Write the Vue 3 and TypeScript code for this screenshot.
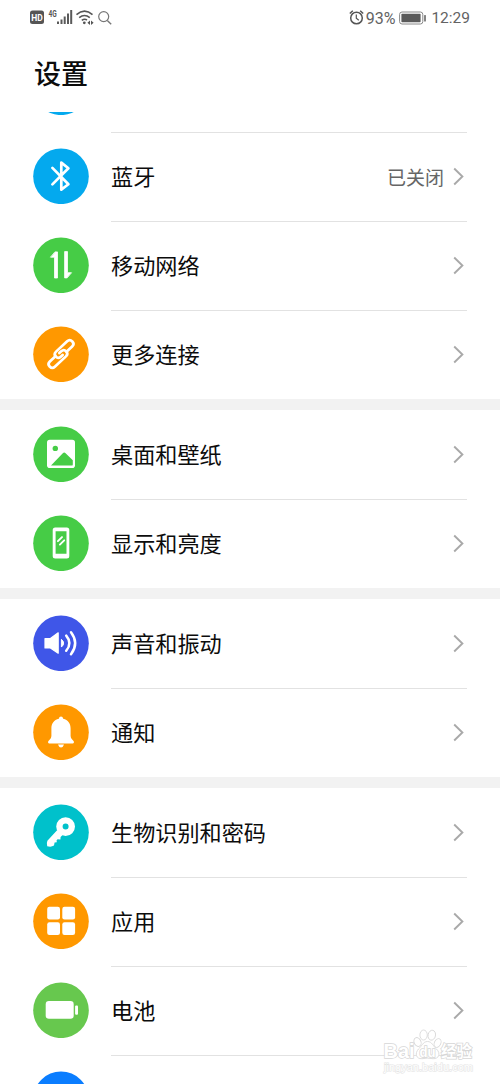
<script setup lang="ts">
type IconName =
  | 'wifi' | 'bluetooth' | 'mobile' | 'link' | 'picture' | 'phone'
  | 'sound' | 'bell' | 'key' | 'apps' | 'battery' | 'storage'

interface Item {
  label: string
  icon: IconName
  tone: string
  value?: string
}

const groups: Item[][] = [
  [
    { label: '', icon: 'wifi', tone: 'sky' },
    { label: '蓝牙', icon: 'bluetooth', tone: 'sky', value: '已关闭' },
    { label: '移动网络', icon: 'mobile', tone: 'green' },
    { label: '更多连接', icon: 'link', tone: 'orange' },
  ],
  [
    { label: '桌面和壁纸', icon: 'picture', tone: 'green' },
    { label: '显示和亮度', icon: 'phone', tone: 'green' },
  ],
  [
    { label: '声音和振动', icon: 'sound', tone: 'indigo' },
    { label: '通知', icon: 'bell', tone: 'orange' },
  ],
  [
    { label: '生物识别和密码', icon: 'key', tone: 'teal' },
    { label: '应用', icon: 'apps', tone: 'orange' },
    { label: '电池', icon: 'battery', tone: 'lime' },
    { label: '', icon: 'storage', tone: 'blue' },
  ],
]
</script>

<template>
  <main class="screen">
    <header class="status">
      <div class="status-left">
        <svg width="84" height="20" viewBox="0 0 84 20">
          <rect x="0" y="3.5" width="14" height="13.5" rx="2.5" fill="#555" />
          <text x="7" y="13.6" class="hd" text-anchor="middle">HD</text>
          <text x="18.6" y="9.6" class="fourg" textLength="8.2" lengthAdjust="spacingAndGlyphs">4G</text>
          <g fill="#5a5a5a">
            <rect x="27" y="14.5" width="2" height="2.5" />
            <rect x="30.5" y="12.5" width="2" height="4.5" />
            <rect x="33.7" y="9.5" width="2" height="7.5" />
            <rect x="37" y="6.5" width="2" height="10.5" />
            <rect x="40.2" y="3" width="2" height="14" />
          </g>
          <g fill="none" stroke="#555" stroke-width="1.6">
            <path d="M46.5 7.6 Q54.5 0.8 62.5 7.6" />
            <path d="M49.2 10.7 Q54.5 6.3 59.8 10.7" />
            <path d="M51.8 13.4 Q54.5 11.4 57 13" />
          </g>
          <circle cx="54.3" cy="15.8" r="1.4" fill="#555" />
          <path d="M60 13.6 L57.4 15.8 L60 18 Z M61 13.6 L63.6 15.8 L61 18 Z" fill="#555" />
          <circle cx="73.7" cy="9.6" r="5" fill="none" stroke="#777" stroke-width="1.2" />
          <path d="M77.3 13.4 L81.2 17.2" stroke="#777" stroke-width="1.4" />
        </svg>
      </div>
      <div class="status-right">
        <svg class="alarm" width="15" height="17" viewBox="0 0 15 17">
          <g fill="none" stroke="#555" stroke-width="1.5">
            <circle cx="7.5" cy="9" r="5.8" />
            <path d="M7.3 5.5 V9.2 L9.8 11.2" stroke-width="1.2" />
            <path d="M0.8 4.5 L3.8 1.8 M11.2 1.8 L14.2 4.5" />
          </g>
        </svg>
        <span class="percent">93%</span>
        <svg class="cell" width="28" height="14" viewBox="0 0 28 14">
          <rect x="0.6" y="1" width="23.2" height="12" rx="2.4" fill="none" stroke="#888" />
          <rect x="2.4" y="2.8" width="19.2" height="8.4" rx="0.8" fill="#5a5a5a" />
          <rect x="25.2" y="4" width="1.6" height="6.5" rx="0.6" fill="#666" />
        </svg>
        <span class="clock">12:29</span>
      </div>
    </header>

    <h1 class="title">设置</h1>

    <div class="list">
      <section v-for="(group, g) in groups" :key="g" class="group">
        <div v-for="item in group" :key="item.icon" class="row">
          <svg
            class="badge" :class="item.tone" width="56" height="56" viewBox="0 0 56 56"
            fill="none" stroke-linecap="round" stroke-linejoin="round"
          >
            <circle class="disc" cx="28" cy="28.3" r="27.8" />
            <path
              v-if="item.icon === 'bluetooth'"
              d="M19.4 19.9 L35.4 36.2 L28.3 41.6 V14.6 L35.4 20.3 L19.4 36.4"
              stroke="#fff" stroke-width="2.7"
            />
            <template v-else-if="item.icon === 'mobile'">
              <path d="M22.3 14.9 H24.5 V41 H21.5 V20.2 H17.8 Z" fill="#fff" stroke="#fff" stroke-width="0.8" />
              <path d="M33.8 40.9 H31.6 V14.6 H34.5 V35.7 H38.2 Z" fill="#fff" stroke="#fff" stroke-width="0.8" />
            </template>
            <g v-else-if="item.icon === 'link'" transform="rotate(-43 28 28)" stroke="#fff" stroke-width="2.7">
              <path d="M33.5 30.2 H41.2 Q44.8 30.2 44.8 26.6 Q44.8 22.9 41.2 22.9 H26 Q22.4 22.9 22.4 26.4 Q22.4 29.8 26 29.8 H28.6" />
              <path d="M22.5 25.8 H14.8 Q11.2 25.8 11.2 29.4 Q11.2 33.1 14.8 33.1 H30 Q33.6 33.1 33.6 29.6 Q33.6 26.2 30 26.2 H27.4" />
            </g>
            <template v-else-if="item.icon === 'picture'">
              <rect x="14" y="13.8" width="28" height="28.2" rx="2.8" fill="#fff" />
              <circle cx="22.3" cy="22.4" r="2.7" fill="#46cc46" />
              <path d="M18 39.6 L29.8 27.2 Q31.2 25.8 32.6 27.2 L39.8 34.2 V38.4 Q39.8 39.6 38.6 39.6 Z" fill="#46cc46" />
            </template>
            <template v-else-if="item.icon === 'phone'">
              <path
                fill="#fff" fill-rule="evenodd"
                d="M22.2 12.5 H33.8 Q36.3 12.5 36.3 15 V41 Q36.3 43.5 33.8 43.5 H22.2 Q19.7 43.5 19.7 41 V15 Q19.7 12.5 22.2 12.5 Z M22.6 16.3 V38.7 H33.5 V16.3 Z"
              />
              <path d="M24.9 26.2 L29 22.1 M26.9 29.6 L31.2 25.3" stroke="#fff" stroke-width="1.9" />
            </template>
            <template v-else-if="item.icon === 'sound'">
              <path d="M12 23.6 H17.4 L25.2 17.8 V38.2 L17.4 33 H12 Z" fill="#fff" stroke="#fff" stroke-width="1.2" />
              <path d="M28.7 24.6 Q32.8 28.2 28.7 31.8 Z" fill="#fff" stroke="#fff" />
              <path d="M33.2 20.6 Q39.6 28.2 33.2 35.8 M38 17.2 Q46.4 28.2 38 39.2" stroke="#fff" stroke-width="2.5" />
            </template>
            <template v-else-if="item.icon === 'bell'">
              <path
                fill="#fff"
                d="M28 12.6 Q29.8 12.6 30.2 14.7 C35 15.7 37.6 19.5 37.6 24.5 V32 Q37.6 34.2 39.4 35.8 L40.8 37.2 Q41.4 39.4 39.8 39.4 H16.2 Q14.6 39.4 15.2 37.2 L16.6 35.8 Q18.4 34.2 18.4 32 V24.5 C18.4 19.5 21 15.7 25.8 14.7 Q26.2 12.6 28 12.6 Z"
              />
              <path d="M25 40.6 H31 Q30.2 43.4 28 43.4 Q25.8 43.4 25 40.6 Z" fill="#fff" />
            </template>
            <template v-else-if="item.icon === 'key'">
              <path
                fill="#fff"
                d="M24.3 26 L29.6 31 L27.6 33 L27.4 35.6 L24.6 35.2 L23.6 36.2 L23.8 38.2 L21.6 38.6 L21 41.6 Q18 43.4 14.2 42.2 Q13.4 39 14.4 36.8 Z"
              />
              <circle cx="32.6" cy="22.6" r="6.2" stroke="#fff" stroke-width="6.4" />
            </template>
            <g v-else-if="item.icon === 'apps'" fill="#fff">
              <rect x="14.2" y="13.8" width="12.8" height="12.7" rx="2.2" />
              <rect x="29.3" y="13.8" width="12.8" height="12.7" rx="2.2" />
              <rect x="14.2" y="29.3" width="12.8" height="12.7" rx="2.2" />
              <rect x="29.3" y="29.3" width="12.8" height="12.7" rx="2.2" />
            </g>
            <g v-else-if="item.icon === 'battery'" fill="#fff">
              <rect x="12.7" y="19" width="28" height="17.8" rx="3.2" />
              <rect x="42.1" y="23.6" width="2.9" height="9.2" rx="1" />
            </g>
          </svg>
          <div class="body">
            <span class="label">{{ item.label }}</span>
            <span v-if="item.value" class="value">{{ item.value }}</span>
            <svg class="chevron" width="12" height="20" viewBox="0 0 12 20">
              <path d="M1.2 1.5 L9.4 9.5 L1.2 17.5" fill="none" stroke="#a9a9a9" stroke-width="1.9" />
            </svg>
          </div>
        </div>
      </section>
    </div>

    <svg class="watermark" width="96" height="50" viewBox="0 0 96 50">
      <g fill="#fff" stroke="#d9d9d9" stroke-width="0.9">
        <ellipse cx="37.5" cy="16" rx="3.4" ry="4.6" transform="rotate(-25 37.5 16)" />
        <ellipse cx="43.6" cy="9" rx="3.7" ry="5" />
        <ellipse cx="51.8" cy="9.2" rx="3.7" ry="5" transform="rotate(12 51.8 9.2)" />
        <ellipse cx="57.6" cy="17" rx="3.2" ry="4.6" transform="rotate(25 57.6 17)" />
        <path d="M47.5 15.5 C52 15.5 53 20 56.5 23 C61 27.5 59 33 53 32.7 Q47.5 31.5 42 32.7 C36 33 34.5 27.5 38.5 23 C42 20 43 15.5 47.5 15.5 Z" />
      </g>
      <g class="mark">
        <text x="3.5" y="32" font-size="21" textLength="31" lengthAdjust="spacingAndGlyphs">Bai</text>
        <text x="39.5" y="30.5" font-size="14" textLength="16" lengthAdjust="spacingAndGlyphs">du</text>
        <text x="61" y="30.5" font-size="15.5">经验</text>
      </g>
      <text class="site" x="4" y="44.5" textLength="89" lengthAdjust="spacingAndGlyphs">jingyan.baidu.com</text>
    </svg>
  </main>
</template>

<style>
body {
  background: #fff;
  overflow: hidden;
}
</style>

<style scoped>
.screen {
  position: relative;
  display: flex;
  flex-direction: column;
  width: 500px;
  height: 1084px;
  overflow: hidden;
  background: #fff;
  color: #0c0c0c;
  font-family: Roboto, "Noto Sans CJK SC", sans-serif;
}

.status {
  display: flex;
  justify-content: space-between;
  align-items: center;
  box-sizing: border-box;
  height: 36px;
  padding: 0 30px;
  color: #636363;
  font-size: 16px;
}

.status-left,
.status-right {
  display: flex;
  align-items: center;
}

.status-left svg {
  display: block;
  margin-top: -2px;
}

.alarm {
  margin-top: -1px;
}

.percent {
  margin-left: 2px;
}

.cell {
  margin: 0 4px 1px 4px;
}

.clock {
  font-size: 15.5px;
}

.hd {
  fill: #fff;
  font: 700 8.5px Roboto, sans-serif;
}

.fourg {
  fill: #555;
  font: 700 8.5px Roboto, sans-serif;
}

.title {
  height: 76px;
  margin: 0;
  padding-left: 34px;
  font-size: 27px;
  font-weight: 500;
  line-height: 79px;
}

.list {
  flex: 1;
  min-height: 0;
  overflow: hidden;
  background: #f2f2f2;
}

.group {
  background: #fff;
}

.group:first-child {
  margin-top: -69px;
}

.group + .group {
  margin-top: 11px;
}

.row {
  display: flex;
  align-items: center;
  height: 89px;
  padding: 0 33px;
}

.badge {
  flex: none;
  display: block;
  margin: 0 22px 1px 0;
}

.sky .disc { fill: #04a9ee; }
.green .disc { fill: #46cc46; }
.orange .disc { fill: #ff9800; }
.indigo .disc { fill: #3f56e8; }
.teal .disc { fill: #00c1cb; }
.lime .disc { fill: #67c84e; }
.blue .disc { fill: #0a7dff; }

.body {
  flex: 1;
  display: flex;
  align-items: center;
  box-sizing: border-box;
  height: 89px;
  border-top: 1px solid transparent;
}

.row + .row .body {
  border-top-color: #e2e2e2;
}

.label {
  flex: 1;
  font-size: 22.15px;
  line-height: 32px;
}

.value {
  margin: 0 9px 2px 0;
  color: #666;
  font-size: 19px;
}

.chevron {
  margin-right: 2px;
}

.watermark {
  position: absolute;
  left: 380px;
  top: 1026px;
}

.mark {
  fill: #fff;
  stroke: #d6d6d6;
  stroke-width: 1.5px;
  paint-order: stroke;
  font-family: "Liberation Sans", "Noto Sans CJK SC", sans-serif;
  font-weight: 700;
}

.site {
  fill: #fff;
  stroke: #e4e4e4;
  stroke-width: 1.2px;
  paint-order: stroke;
  font: 11px "Liberation Sans", sans-serif;
}
</style>
